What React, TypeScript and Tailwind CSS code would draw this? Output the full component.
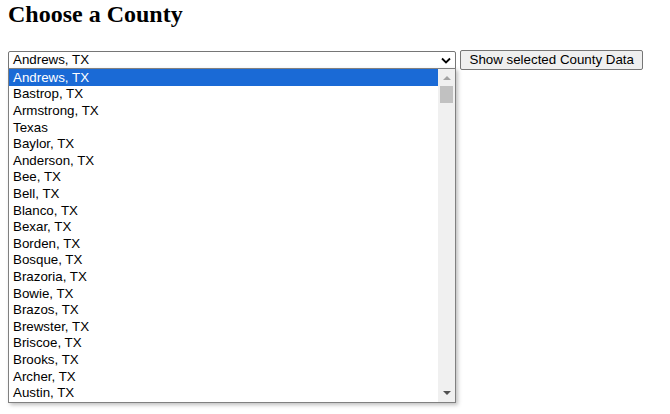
import React from "react";

const counties = [
  "Andrews, TX",
  "Bastrop, TX",
  "Armstrong, TX",
  "Texas",
  "Baylor, TX",
  "Anderson, TX",
  "Bee, TX",
  "Bell, TX",
  "Blanco, TX",
  "Bexar, TX",
  "Borden, TX",
  "Bosque, TX",
  "Brazoria, TX",
  "Bowie, TX",
  "Brazos, TX",
  "Brewster, TX",
  "Briscoe, TX",
  "Brooks, TX",
  "Archer, TX",
  "Austin, TX",
];

export default function App() {
  return (
    <div className="relative w-[670px] h-[414px] bg-white px-2 text-black">
      <h2 className="font-['Liberation_Serif',serif] text-[24px] font-bold leading-[28px]">
        Choose a County
      </h2>

      <div className="mt-[22px] flex items-center gap-1 font-['Liberation_Sans',Arial,sans-serif] text-[13.33px]">
        <div className="flex h-[19px] w-[448px] items-center justify-between rounded-[2px] border border-[#767676] bg-white pl-[4px] pr-[4px]">
          <span>Andrews, TX</span>
          <svg width="10" height="7" viewBox="0 0 10 7">
            <path d="M1 1.5 L5 5.5 L9 1.5" fill="none" stroke="#000" strokeWidth="1.8" />
          </svg>
        </div>
        <button className="h-[20px] rounded-[2px] border border-[#767676] bg-[#efefef] px-[8.5px] leading-none">
          Show selected County Data
        </button>
      </div>

      {/* open dropdown list */}
      <div className="absolute left-2 top-[68px] flex h-[335px] w-[448px] border border-[#808080] bg-white font-['Liberation_Sans',Arial,sans-serif] text-[13.33px] shadow-[2px_2px_4px_rgba(0,0,0,0.25)]">
        <ul className="flex-1">
          {counties.map((c, i) => (
            <li
              key={c}
              className={`flex h-[16.6px] items-center pl-[4px] pt-[1px] ${
                i === 0 ? "bg-[#1a6ad6] text-white" : ""
              }`}
            >
              {c}
            </li>
          ))}
        </ul>
        <div className="flex w-[17px] flex-col items-center bg-[#f0f0f0]">
          <div className="flex h-[17px] items-center justify-center">
            <svg width="8" height="5" viewBox="0 0 8 5">
              <path d="M0 5 L4 1 L8 5 Z" fill="#a3a3a3" />
            </svg>
          </div>
          <div className="h-[17px] w-[13px] bg-[#c1c1c1]" />
          <div className="flex-1" />
          <div className="flex h-[17px] items-center justify-center">
            <svg width="8" height="5" viewBox="0 0 8 5">
              <path d="M0 0 L8 0 L4 4 Z" fill="#505050" />
            </svg>
          </div>
        </div>
      </div>
    </div>
  );
}
